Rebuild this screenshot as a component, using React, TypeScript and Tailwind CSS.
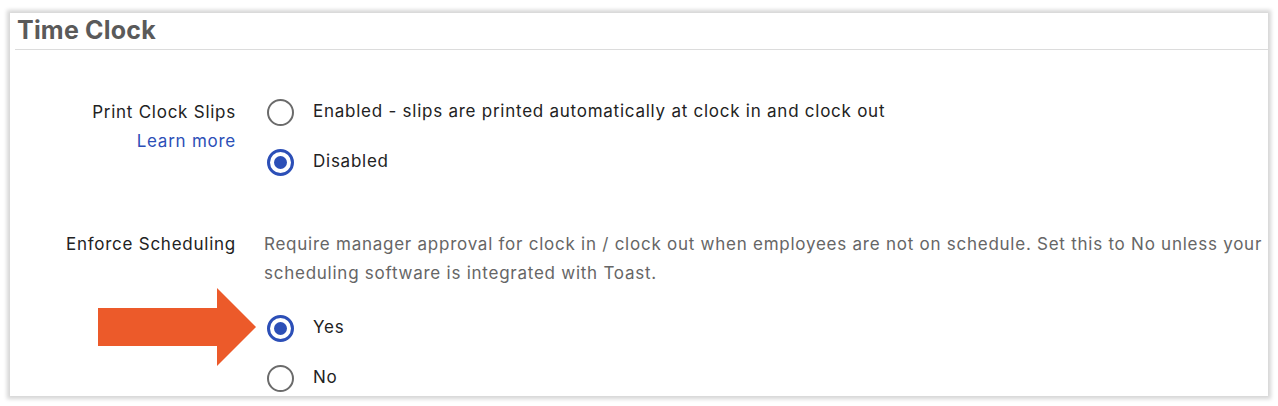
import React from "react";

// Radio as drawn in the settings page: gray ring when off, blue ring + dot when on
function Radio({ checked }: { checked?: boolean }) {
  return checked ? (
    <span className="flex h-[27px] w-[27px] shrink-0 items-center justify-center rounded-full border-[3px] border-[#2c4fb7]">
      <span className="h-[13px] w-[13px] rounded-full bg-[#2c4fb7]" />
    </span>
  ) : (
    <span className="h-[27px] w-[27px] shrink-0 rounded-full border-2 border-[#6b6b6b]" />
  );
}

function Option({ label, checked }: { label: string; checked?: boolean }) {
  return (
    <label className="flex h-[50px] items-center pl-[3px]">
      <Radio checked={checked} />
      <span className="ml-[19px] text-[17px] tracking-[0.75px] text-[#222]">{label}</span>
    </label>
  );
}

export default function App() {
  return (
    <div
      className="h-[406px] w-[1278px] bg-white pl-[10px] pt-[13px]"
      style={{ fontFamily: "Inter, 'Liberation Sans', sans-serif" }}
    >
      <div className="relative h-[383px] w-[1258px] overflow-hidden bg-white shadow-[0_0_4px_3px_#d6d6d6]">
        {/* Header */}
        <div className="ml-[5px] h-[37px] border-b border-[#dcdcdc] pl-[2px] pt-[2px]">
          <h2 className="text-[25px] leading-[30px] font-bold tracking-[0.2px] text-[#5a5a5a]">Time Clock</h2>
        </div>

        <div className="pt-[37px] tracking-[0.75px]">
          {/* Print Clock Slips */}
          <div className="flex">
            <div className="flex w-[226px] shrink-0 flex-col items-end pt-[13px] text-[17px] leading-[24px]">
              <span className="text-[#222]">Print Clock Slips</span>
              <a className="mt-[5px] text-[#2c4fb7]">Learn more</a>
            </div>
            <div className="ml-[28px] flex flex-col">
              <Option label="Enabled - slips are printed automatically at clock in and clock out" />
              <Option label="Disabled" checked />
            </div>
          </div>

          {/* Enforce Scheduling */}
          <div className="mt-[43px] flex">
            <div className="flex w-[226px] shrink-0 justify-end text-[17px] leading-[29px] text-[#222]">
              Enforce Scheduling
            </div>
            <div className="ml-[28px] flex flex-col">
              <p className="text-[17px] leading-[29px] text-[#666]">
                <span className="block whitespace-nowrap">
                  Require manager approval for clock in / clock out when employees are not on schedule. Set this to No unless your
                </span>
                <span className="block whitespace-nowrap">scheduling software is integrated with Toast.</span>
              </p>
              <div className="mt-[15px] flex flex-col">
                <Option label="Yes" checked />
                <Option label="No" />
              </div>
            </div>
          </div>
        </div>

        {/* Orange callout arrow pointing at "Yes" */}
        <svg className="absolute left-[88px] top-[275px]" width="160" height="80" viewBox="0 0 160 80">
          <polygon points="0,20 119,20 119,0 158,39 119,78 119,58 0,58" fill="#ec5a2a" />
        </svg>
      </div>
    </div>
  );
}
